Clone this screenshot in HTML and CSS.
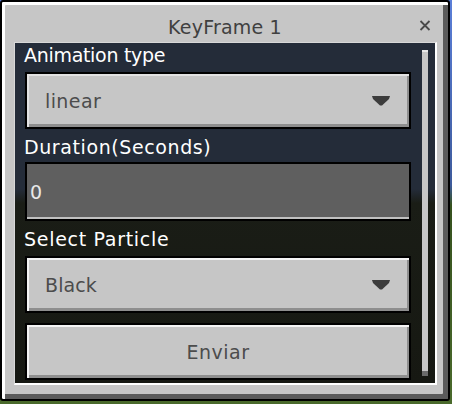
FILE: index.html
```html
<!DOCTYPE html>
<html>
<head>
<meta charset="utf-8">
<link rel="stylesheet" href="styles.css">
</head>
<body>
<div class="dialog">
  <div class="titlebar">
    <span class="spacer"></span>
    <span class="title">KeyFrame 1</span>
    <span class="close">
      <svg width="12" height="11" viewBox="0 0 12 11"><path d="M1.5 1 L10.5 10 M10.5 1 L1.5 10" stroke="#4a4a4a" stroke-width="1.8" fill="none"/></svg>
    </span>
  </div>
  <div class="panel">
    <div class="content">
      <div class="label l1">Animation type</div>
      <div class="btn dropdown d1">
        <span class="btn-text t-linear">linear</span>
        <svg class="arrow" width="18" height="10" viewBox="0 0 18 10"><polygon points="0,0 18,0 17,3 10,9.5 8,9.5 1,3" fill="#3c3c3c"/></svg>
      </div>
      <div class="label l2">Duration(Seconds)</div>
      <div class="input"><span class="input-text">0</span></div>
      <div class="label l3">Select Particle</div>
      <div class="btn dropdown d2">
        <span class="btn-text t-black">Black</span>
        <svg class="arrow" width="18" height="10" viewBox="0 0 18 10"><polygon points="0,0 18,0 17,3 10,9.5 8,9.5 1,3" fill="#3c3c3c"/></svg>
      </div>
      <div class="btn submit"><span class="btn-text t-enviar">Enviar</span></div>
    </div>
    <div class="scrollbar"></div>
  </div>
</div>
</body>
</html>
```
FILE: styles.css
```css
html, body {
  margin: 0;
  padding: 0;
}
body {
  width: 452px;
  height: 404px;
  overflow: hidden;
  background: linear-gradient(to bottom, #5b7fd8 0px, #3e5b9c 185px, #36521f 205px, #4a6a2c 404px);
  font-family: "DejaVu Sans", sans-serif;
  font-size: 19px;
  line-height: 22px;
}
.dialog {
  width: 450px;
  height: 401px;
  box-sizing: border-box;
  border: 2px solid #000;
  border-radius: 3px;
  background: #c6c6c6;
  box-shadow: inset 3px 3px 0 #ffffff, inset -5px -5px 0 #5b5b5b;
  display: flex;
  flex-direction: column;
  padding: 0 11px 14px 12px;
}
.titlebar {
  height: 40px;
  box-sizing: border-box;
  padding-top: 14px;
  display: grid;
  grid-template-columns: 1fr auto 1fr;
  align-items: start;
  margin: 0 -11px 0 -12px;
}
.title {
  color: #404040;
  letter-spacing: 0.2px;
  white-space: nowrap;
}
.close {
  justify-self: end;
  margin-right: 17px;
  padding-top: 4px;
  display: flex;
}
.panel {
  width: 423px;
  height: 343px;
  box-sizing: border-box;
  border-top: 1px solid #d8d8d8;
  border-left: 1px solid #d8d8d8;
  border-right: 2px solid #ffffff;
  border-bottom: 2px solid #ffffff;
  background: linear-gradient(to bottom, #242c39 0px, #242c39 146px, #1a1d16 160px, #161812 100%);
  display: flex;
}
.content {
  width: 386px;
  padding: 1px 0 0 10px;
  display: flex;
  flex-direction: column;
}
.label {
  color: #ffffff;
  height: 22px;
  margin-left: -1px;
  white-space: nowrap;
}
.l1 { letter-spacing: -0.3px; margin-bottom: 6px; }
.l2 { letter-spacing: 0.6px; margin-top: 7px; margin-bottom: 4px; }
.l3 { letter-spacing: 0.7px; margin-top: 7px; margin-bottom: 6px; }
.btn {
  height: 57px;
  box-sizing: border-box;
  border: 2px solid #000;
  background: #c6c6c6;
  box-shadow: inset 2px 2px 0 #e2e2e2, inset -2px -3px 0 #8e8e8e;
  display: flex;
  align-items: center;
  color: #4c4c4c;
}
.dropdown {
  justify-content: space-between;
  padding: 0 19px 0 18px;
}
.btn-text {
  white-space: nowrap;
}
.t-linear { letter-spacing: 0.4px; }
.t-black { letter-spacing: 0.1px; }
.t-enviar { letter-spacing: 0.5px; }
.d2 {
  box-shadow: inset 2px 2px 0 #f4f4f4, inset -2px -3px 0 #8e8e8e;
}
.submit {
  justify-content: center;
  margin-top: 10px;
  box-shadow: inset 2px 2px 0 #f4f4f4, inset -2px -3px 0 #8e8e8e;
}
.input {
  height: 59px;
  box-sizing: border-box;
  border: 2px solid #000;
  background: #5f5f5f;
  box-shadow: inset 0 -2px 0 #c0c0c0;
  display: flex;
  align-items: center;
  padding: 0 0 0 3px;
}
.input-text {
  color: #e8e8e8;
}
.scrollbar {
  width: 6px;
  height: 326px;
  margin: 7px 0 0 11px;
  box-sizing: border-box;
  background: #c6c6c6;
  border-top: 2px solid #e8e8e8;
  border-bottom: 5px solid #6a6a6a;
}
```
